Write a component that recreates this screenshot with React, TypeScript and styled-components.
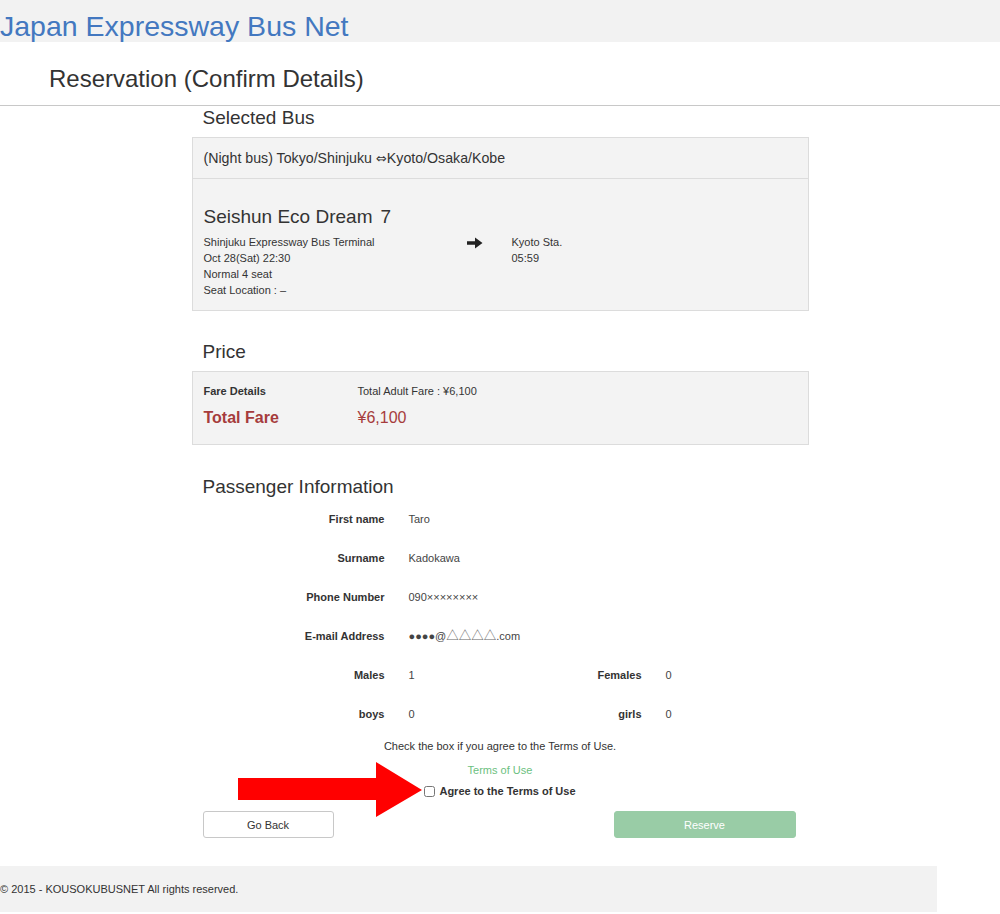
import React from "react";
import styled, { createGlobalStyle } from "styled-components";

const Global = createGlobalStyle`
  html, body { margin: 0; padding: 0; background: #fff; }
  body { font-family: "Liberation Sans", Arial, sans-serif; color: #333; }
  * { box-sizing: border-box; }
`;

const TopBar = styled.header`
  height: 42px;
  background: #f2f2f2;
`;

const Brand = styled.a`
  display: block;
  font-size: 28.5px;
  line-height: 53px;
  height: 42px;
  color: #4378c0;
  text-decoration: none;
`;

const PageTitle = styled.h1`
  margin: 0;
  padding: 22px 0 11px 49px;
  font-size: 24px;
  line-height: 30px;
  font-weight: normal;
  color: #333;
  border-bottom: 1px solid #c8c8c8;
`;

const Container = styled.main`
  width: 617px;
  margin: 0 auto;
  position: relative;
`;

const SectionTitle = styled.h2<{ $top?: number; $bottom?: number }>`
  margin: ${(p) => p.$top ?? 0}px 0 ${(p) => p.$bottom ?? 7}px;
  padding-left: 11px;
  font-size: 19px;
  line-height: 24px;
  font-weight: normal;
  color: #333;
`;

const Panel = styled.section`
  background: #f3f3f3;
  border: 1px solid #dcdcdc;
`;

const PanelHeader = styled.div`
  height: 41px;
  padding: 10px 11px;
  font-size: 14.2px;
  line-height: 20px;
  border-bottom: 1px solid #dcdcdc;
  white-space: nowrap;
`;

const Swap = styled.span`
  font-family: "DejaVu Sans", sans-serif;
  font-size: 13px;
  line-height: 1;
`;

const PanelBody = styled.div<{ $pad: string }>`
  padding: ${(p) => p.$pad};
`;

const BusName = styled.div`
  font-size: 19px;
  line-height: 26px;
  margin-bottom: 4px;
  span { margin-left: 8px; }
`;

const BusGrid = styled.div`
  display: grid;
  grid-template-columns: 263px 45px 1fr;
  font-size: 11px;
  line-height: 16px;
`;

const ArrowCell = styled.div`
  padding-top: 3px;
`;

const FareRow = styled.div<{ $big?: boolean }>`
  display: grid;
  grid-template-columns: 154px 1fr;
  font-size: ${(p) => (p.$big ? "16px" : "11px")};
  line-height: ${(p) => (p.$big ? "22px" : "16px")};
  margin-top: ${(p) => (p.$big ? "8px" : "0")};
  color: ${(p) => (p.$big ? "#a63c3c" : "#333")};
`;

const FareLabel = styled.div`
  font-weight: bold;
`;

const InfoGrid = styled.div`
  display: grid;
  grid-template-columns: 193px 136px 73px auto;
  column-gap: 24px;
  grid-auto-rows: 39px;
  align-items: center;
  font-size: 11px;
  line-height: 16px;
`;

const InfoLabel = styled.div`
  text-align: right;
  font-weight: bold;
`;

const InfoValue = styled.div<{ $span?: boolean }>`
  grid-column: ${(p) => (p.$span ? "2 / 5" : "auto")};
  color: #444;
`;

const Masked = styled.span`
  font-family: "Noto Sans CJK JP", sans-serif;
  font-size: 12.5px;
  line-height: 1;
  color: #666;
`;

const Note = styled.p<{ $top: number }>`
  margin: ${(p) => p.$top}px 0 0;
  text-align: center;
  font-size: 11px;
  line-height: 16px;
`;

const TermsLink = styled.a`
  color: #6cbf80;
  text-decoration: none;
`;

const AgreeRow = styled.label`
  margin-top: 5px;
  display: flex;
  justify-content: center;
  align-items: center;
  font-size: 11px;
  line-height: 16px;
  font-weight: bold;
  input {
    width: 11px;
    height: 11px;
    margin: 0 4px 0 0;
  }
`;

const Buttons = styled.div`
  display: flex;
  justify-content: space-between;
  margin-top: 12px;
  padding: 0 13px 0 11px;
`;

const Button = styled.button<{ $primary?: boolean }>`
  height: 27px;
  width: ${(p) => (p.$primary ? "182px" : "131px")};
  border-radius: 3px;
  font-family: "Liberation Sans", Arial, sans-serif;
  font-size: 11px;
  border: 1px solid ${(p) => (p.$primary ? "#99cca6" : "#c8c8c8")};
  background: ${(p) => (p.$primary ? "#99cca6" : "#fff")};
  color: ${(p) => (p.$primary ? "#fff" : "#333")};
`;

const Pointer = styled.svg`
  position: absolute;
  left: 46px;
  top: 656px;
`;

const Footer = styled.footer`
  margin-top: 28px;
  width: 937px;
  height: 46px;
  background: #f2f2f2;
  font-size: 11px;
  line-height: 46px;
`;

const RightArrow = () => (
  <svg width="16" height="12" viewBox="0 0 16 12">
    <path d="M0 4.2h8V0.5L15.5 6 8 11.5V7.8H0z" fill="#222" />
  </svg>
);

export default function App() {
  return (
    <>
      <Global />
      <TopBar>
        <Brand>Japan Expressway Bus Net</Brand>
      </TopBar>
      <PageTitle>Reservation (Confirm Details)</PageTitle>
      <Container>
        <SectionTitle>Selected Bus</SectionTitle>
        <Panel>
          <PanelHeader>
            (Night bus) Tokyo/Shinjuku <Swap>⇔</Swap>Kyoto/Osaka/Kobe
          </PanelHeader>
          <PanelBody $pad="25px 11px 12px">
            <BusName>
              Seishun Eco Dream<span>7</span>
            </BusName>
            <BusGrid>
              <div>
                Shinjuku Expressway Bus Terminal
                <br />
                Oct 28(Sat) 22:30
                <br />
                Normal 4 seat
                <br />
                Seat Location : –
              </div>
              <ArrowCell>
                <RightArrow />
              </ArrowCell>
              <div>
                Kyoto Sta.
                <br />
                05:59
              </div>
            </BusGrid>
          </PanelBody>
        </Panel>

        <SectionTitle $top={29}>Price</SectionTitle>
        <Panel>
          <PanelBody $pad="11px 11px 15px">
            <FareRow>
              <FareLabel>Fare Details</FareLabel>
              <div>Total Adult Fare : ¥6,100</div>
            </FareRow>
            <FareRow $big>
              <FareLabel>Total Fare</FareLabel>
              <div>¥6,100</div>
            </FareRow>
          </PanelBody>
        </Panel>

        <SectionTitle $top={30} $bottom={0}>
          Passenger Information
        </SectionTitle>
        <InfoGrid>
          <InfoLabel>First name</InfoLabel>
          <InfoValue $span>Taro</InfoValue>
          <InfoLabel>Surname</InfoLabel>
          <InfoValue $span>Kadokawa</InfoValue>
          <InfoLabel>Phone Number</InfoLabel>
          <InfoValue $span>090××××××××</InfoValue>
          <InfoLabel>E-mail Address</InfoLabel>
          <InfoValue $span>
            ●●●●@<Masked>△△△△</Masked>.com
          </InfoValue>
          <InfoLabel>Males</InfoLabel>
          <InfoValue>1</InfoValue>
          <InfoLabel>Females</InfoLabel>
          <InfoValue>0</InfoValue>
          <InfoLabel>boys</InfoLabel>
          <InfoValue>0</InfoValue>
          <InfoLabel>girls</InfoLabel>
          <InfoValue>0</InfoValue>
        </InfoGrid>

        <Note $top={5}>Check the box if you agree to the Terms of Use.</Note>
        <Note $top={8}>
          <TermsLink>Terms of Use</TermsLink>
        </Note>
        <AgreeRow>
          <input type="checkbox" />
          Agree to the Terms of Use
        </AgreeRow>
        <Buttons>
          <Button>Go Back</Button>
          <Button $primary>Reserve</Button>
        </Buttons>
        <Pointer width="186" height="56" viewBox="0 0 186 56">
          <polygon points="0,16 138,16 138,0 184,28 138,55 138,38 0,38" fill="#ff0000" />
        </Pointer>
      </Container>
      <Footer>© 2015 - KOUSOKUBUSNET All rights reserved.</Footer>
    </>
  );
}
